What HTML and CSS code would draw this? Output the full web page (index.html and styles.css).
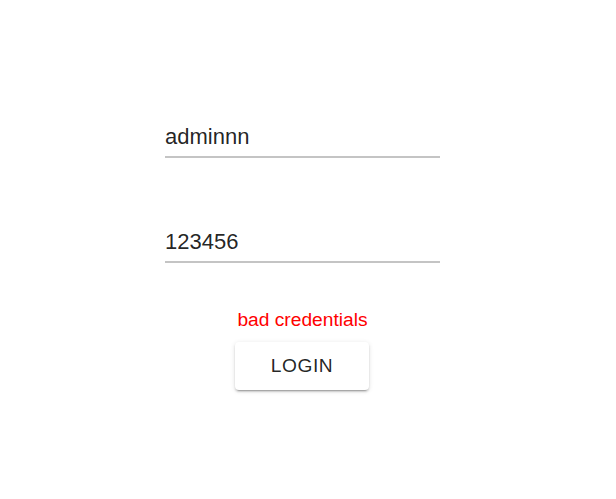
FILE: index.html
```html
<!DOCTYPE html>
<html>
<head>
<meta charset="utf-8">
<link rel="stylesheet" href="styles.css">
</head>
<body>
<div class="page">
  <form class="login">
    <div class="field"><span class="value">adminnn</span></div>
    <div class="field field-second"><span class="value">123456</span></div>
    <div class="error">bad credentials</div>
    <button type="button" class="btn">Login</button>
  </form>
</div>
</body>
</html>
```
FILE: styles.css
```css
html, body {
  margin: 0;
  padding: 0;
  background: #ffffff;
}
body {
  font-family: "Liberation Sans", Arial, sans-serif;
}
.page {
  width: 605px;
  height: 499px;
  box-sizing: border-box;
  padding-top: 121px;
  display: flex;
  flex-direction: column;
  align-items: center;
}
.login {
  display: flex;
  flex-direction: column;
  align-items: center;
}
.field {
  width: 275px;
  height: 32px;
  padding-bottom: 3px;
  border-bottom: 2px solid #c4c4c4;
  font-size: 22px;
  line-height: 32px;
  color: rgba(0, 0, 0, 0.87);
}
.field-second {
  margin-top: 68px;
}
.error {
  margin-top: 45px;
  color: #ff0000;
  font-size: 19.2px;
  line-height: 24px;
}
.btn {
  margin-top: 10px;
  margin-right: 1px;
  width: 134px;
  height: 48px;
  border: none;
  border-radius: 4px;
  background: #ffffff;
  box-shadow: 0 3px 1px -2px rgba(0,0,0,0.2), 0 2px 2px 0 rgba(0,0,0,0.14), 0 1px 5px 0 rgba(0,0,0,0.12);
  font-family: "Liberation Sans", Arial, sans-serif;
  font-size: 19.2px;
  letter-spacing: 0.55px;
  text-transform: uppercase;
  color: rgba(0, 0, 0, 0.87);
  padding: 0;
  display: flex;
  align-items: center;
  justify-content: center;
}
```
